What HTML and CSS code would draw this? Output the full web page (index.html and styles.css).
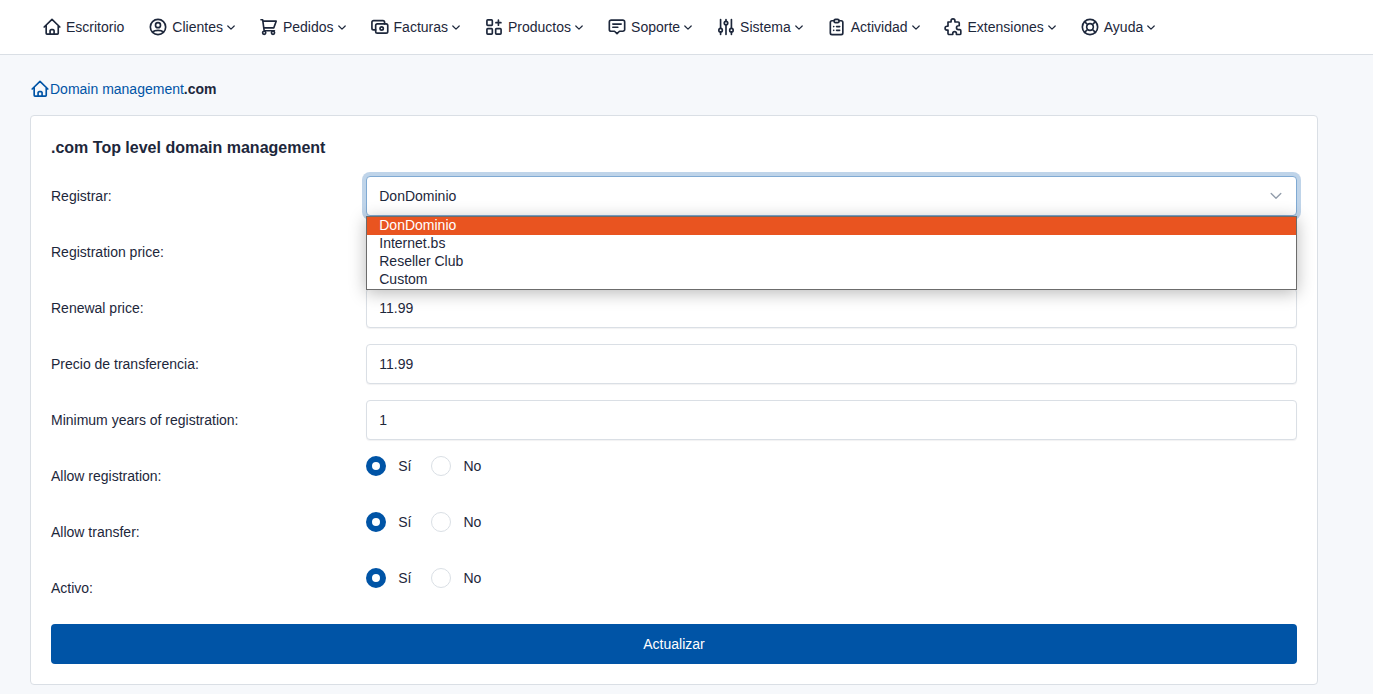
FILE: index.html
```html
<!DOCTYPE html>
<html lang="es">
<head>
<meta charset="utf-8">
<meta name="viewport" content="width=device-width, initial-scale=1">
<title>Domain management</title>
<link rel="stylesheet" href="styles.css">
</head>
<body>
<svg class="sprite" aria-hidden="true">
  <symbol id="home" viewBox="0 0 24 24"><path d="M5 10v9.500a1 1 0 0 0 1 1h12.500a1 1 0 0 0 1-1V10M2.600 12 12 2.900l9.400 9.100M9.700 20.500v-4a1.300 1.300 0 0 1 1.300-1.300h2.200a1.300 1.300 0 0 1 1.300 1.300v4"/></symbol>
  <symbol id="user" viewBox="0 0 24 24"><circle cx="12" cy="12" r="9.200"/><circle cx="12" cy="9.800" r="3"/><path d="M5.500 18c3-2.600 10-2.600 13 0"/></symbol>
  <symbol id="cart" viewBox="0 0 24 24"><path d="M2.400 3.300h2l1.800 13.200h12.300M5 5h15.600l-2.800 8H6.100"/><circle cx="6.200" cy="19" r="1.900"/><circle cx="16.800" cy="19" r="1.900"/></symbol>
  <symbol id="cash" viewBox="0 0 24 24"><rect x="6.800" y="8.300" width="14.500" height="11" rx="2"/><path d="M6.800 15.500H4.300a2 2 0 0 1-2-2V6.300a2 2 0 0 1 2-2h11.200a2 2 0 0 1 2 2v2"/><circle cx="14" cy="13.800" r="2"/></symbol>
  <symbol id="apps" viewBox="0 0 24 24"><rect x="3.500" y="3.500" width="6.500" height="6.500" rx="1"/><rect x="3.500" y="14" width="6.500" height="6.500" rx="1"/><rect x="14" y="14" width="6.500" height="6.500" rx="1"/><path d="M17.300 3.800v6M14.300 6.800h6"/></symbol>
  <symbol id="message" viewBox="0 0 24 24"><path d="M5 3.700h14a2.200 2.200 0 0 1 2.200 2.200v9a2.200 2.200 0 0 1-2.200 2.200h-4L12 20l-3-2.900H5a2.200 2.200 0 0 1-2.200-2.200v-9A2.200 2.200 0 0 1 5 3.700zM7 8.500h10M7 12.300h6"/></symbol>
  <symbol id="sliders" viewBox="0 0 24 24"><path d="M5.500 3v10.500M5.500 18v3M12 3v2M12 9.500V21M18.500 3v10.500M18.500 18v3"/><circle cx="5.500" cy="15.800" r="2.100"/><circle cx="12" cy="7.300" r="2.100"/><circle cx="18.500" cy="15.800" r="2.100"/></symbol>
  <symbol id="clipboard" viewBox="0 0 24 24"><path d="M9 4.500H6a2 2 0 0 0-2 2v12.700a2 2 0 0 0 2 2h11a2 2 0 0 0 2-2V6.500a2 2 0 0 0-2-2h-3"/><rect x="8.500" y="2.800" width="6" height="4" rx="1.700"/><path d="M8 11.500h.1M11.500 11.500h3.700M8 16h.1M11.500 16h3.700"/></symbol>
  <symbol id="puzzle" viewBox="1 0 24 24"><path d="M5.800 6h3.700V4.500a2.300 2.300 0 0 1 4.600 0V6H18a1.300 1.300 0 0 1 1.300 1.300v3.200h-1a2.300 2.300 0 0 0 0 4.600h1.600a1.300 1.300 0 0 1 1.300 1.300v3.300a1.300 1.300 0 0 1-1.300 1.300h-4v-1.300a2.200 2.200 0 0 0-4.400 0V21H7.100a1.300 1.300 0 0 1-1.300-1.300v-4H4.600a2.300 2.300 0 0 1 0-4.600h1.200z"/></symbol>
  <symbol id="lifebuoy" viewBox="0 0 24 24"><circle cx="12" cy="12" r="9.200"/><circle cx="12" cy="12" r="4"/><path d="m9 15-3.500 3.500M15 15l3.500 3.500M9 9 5.500 5.500M15 9l3.500-3.500"/></symbol>
  <symbol id="chevron" viewBox="0 0 8 8"><path d="m.8 3 3.200 3.200L7.200 3"/></symbol>
</svg>

<header class="topbar">
  <nav class="nav" aria-label="Principal">
    <a class="nav-item" href="#"><svg class="icon"><use href="#home"/></svg>Escritorio</a>
    <a class="nav-item" href="#"><svg class="icon"><use href="#user"/></svg>Clientes<svg class="caret"><use href="#chevron"/></svg></a>
    <a class="nav-item" href="#"><svg class="icon"><use href="#cart"/></svg>Pedidos<svg class="caret"><use href="#chevron"/></svg></a>
    <a class="nav-item" href="#"><svg class="icon"><use href="#cash"/></svg>Facturas<svg class="caret"><use href="#chevron"/></svg></a>
    <a class="nav-item" href="#"><svg class="icon"><use href="#apps"/></svg>Productos<svg class="caret"><use href="#chevron"/></svg></a>
    <a class="nav-item" href="#"><svg class="icon"><use href="#message"/></svg>Soporte<svg class="caret"><use href="#chevron"/></svg></a>
    <a class="nav-item" href="#"><svg class="icon"><use href="#sliders"/></svg>Sistema<svg class="caret"><use href="#chevron"/></svg></a>
    <a class="nav-item" href="#"><svg class="icon"><use href="#clipboard"/></svg>Actividad<svg class="caret"><use href="#chevron"/></svg></a>
    <a class="nav-item" href="#"><svg class="icon"><use href="#puzzle"/></svg>Extensiones<svg class="caret"><use href="#chevron"/></svg></a>
    <a class="nav-item" href="#"><svg class="icon"><use href="#lifebuoy"/></svg>Ayuda<svg class="caret"><use href="#chevron"/></svg></a>
  </nav>
</header>

<main class="page">
  <nav class="breadcrumb" aria-label="Breadcrumb">
    <a class="crumb" href="#" aria-label="Escritorio"><svg class="icon"><use href="#home"/></svg></a><a class="crumb" href="#">Domain management</a><strong>.com</strong>
  </nav>

  <form class="card">
    <h1 class="card-title">.com Top level domain management</h1>

    <div class="row">
      <label for="registrar">Registrar:</label>
      <div class="select">
        <select class="field field-open" id="registrar">
          <option selected>DonDominio</option>
          <option>Internet.bs</option>
          <option>Reseller Club</option>
          <option>Custom</option>
        </select>
        <svg class="select-caret"><use href="#chevron"/></svg>
        <ul class="options" role="listbox" aria-label="Registrar">
          <li class="option option-active" role="option" aria-selected="true">DonDominio</li>
          <li class="option" role="option">Internet.bs</li>
          <li class="option" role="option">Reseller Club</li>
          <li class="option" role="option">Custom</li>
        </ul>
      </div>
    </div>
    <div class="row">
      <label for="price-registration">Registration price:</label>
      <input class="field" id="price-registration" type="text">
    </div>
    <div class="row">
      <label for="price-renew">Renewal price:</label>
      <input class="field" id="price-renew" type="text" value="11.99">
    </div>
    <div class="row">
      <label for="price-transfer">Precio de transferencia:</label>
      <input class="field" id="price-transfer" type="text" value="11.99">
    </div>
    <div class="row">
      <label for="min-years">Minimum years of registration:</label>
      <input class="field" id="min-years" type="text" value="1">
    </div>
    <div class="row" role="radiogroup" aria-labelledby="lbl-register">
      <span id="lbl-register">Allow registration:</span>
      <div class="radios">
        <label class="radio"><input type="radio" name="allow_register" checked>Sí</label>
        <label class="radio"><input type="radio" name="allow_register">No</label>
      </div>
    </div>
    <div class="row" role="radiogroup" aria-labelledby="lbl-transfer">
      <span id="lbl-transfer">Allow transfer:</span>
      <div class="radios">
        <label class="radio"><input type="radio" name="allow_transfer" checked>Sí</label>
        <label class="radio"><input type="radio" name="allow_transfer">No</label>
      </div>
    </div>
    <div class="row" role="radiogroup" aria-labelledby="lbl-active">
      <span id="lbl-active">Activo:</span>
      <div class="radios">
        <label class="radio"><input type="radio" name="active" checked>Sí</label>
        <label class="radio"><input type="radio" name="active">No</label>
      </div>
    </div>

    <button class="submit" type="submit">Actualizar</button>
  </form>
</main>
</body>
</html>
```
FILE: styles.css
```css
* { box-sizing: border-box; }

body {
  margin: 0;
  background: #f6f8fb;
  color: #1d273b;
  font-family: "Liberation Sans", Arial, sans-serif;
  font-size: 14px;
  line-height: 20px;
}

.sprite { position: absolute; width: 0; height: 0; }

.icon, .caret, .select-caret {
  flex: none;
  fill: none;
  stroke: currentColor;
  stroke-linecap: round;
  stroke-linejoin: round;
}
.icon { width: 20px; height: 20px; stroke-width: 2; }
.caret { width: 8px; height: 8px; margin-left: 4px; stroke-width: 1.2; }

.topbar {
  background: #fff;
  border-bottom: 1px solid #dadfe5;
}
.nav {
  display: flex;
  gap: 24px;
  padding: 17px 42px;
}
.nav-item {
  display: flex;
  align-items: center;
  color: inherit;
  text-decoration: none;
}
.nav-item .icon { margin-right: 4px; }

.page { padding: 24px 55px 9px 30px; }

.breadcrumb {
  display: flex;
  align-items: center;
  margin-bottom: 16px;
}
.crumb {
  display: flex;
  color: #0054a6;
  text-decoration: none;
}

.card {
  display: flex;
  flex-direction: column;
  gap: 16px;
  padding: 20px;
  background: #fff;
  border: 1px solid #dadfe5;
  border-radius: 4px;
}
.card-title {
  margin: 0;
  font-size: 16px;
  line-height: 24px;
}

.row {
  display: grid;
  grid-template-columns: 1fr 3fr;
  column-gap: 5px;
  align-items: center;
  min-height: 40px;
}

.field {
  display: block;
  width: 100%;
  height: 40px;
  padding: 0 12px;
  background: #fff;
  border: 1px solid #dadfe5;
  border-radius: 4px;
  box-shadow: 0 1px 1px rgba(29, 39, 59, .06);
  color: inherit;
  font: inherit;
  appearance: none;
  outline: 0;
}
.field-open {
  border-color: #80aad3;
  box-shadow: 0 0 0 4px rgba(0, 84, 166, .25);
}

.select { position: relative; }
.select-caret {
  position: absolute;
  top: 13px;
  right: 15px;
  width: 12px;
  height: 12px;
  color: #929dab;
  stroke-width: .9;
}
.options {
  position: absolute;
  z-index: 1;
  top: 100%;
  left: 0;
  right: 0;
  margin: 0;
  padding: 0;
  background: #fff;
  border: 1px solid #6c6c6c;
  box-shadow: 0 3px 16px rgba(0, 0, 0, .28);
  list-style: none;
}
.option {
  padding: 0 12px 2px;
  line-height: 16px;
}
.option-active { background: #e95420; color: #fff; }

.radios {
  display: flex;
  align-self: start;
  gap: 20px;
}
.radio {
  display: flex;
  align-items: center;
  gap: 12px;
}
.radio input {
  width: 20px;
  height: 20px;
  margin: 0;
  background: #fff;
  border: 1px solid #dadfe5;
  border-radius: 50%;
  appearance: none;
}
.radio input:checked {
  border: 6px solid #0054a6;
}

.submit {
  height: 40px;
  padding: 0 16px;
  background: #0054a6;
  border: 0;
  border-radius: 4px;
  color: #fff;
  font: inherit;
}
```
